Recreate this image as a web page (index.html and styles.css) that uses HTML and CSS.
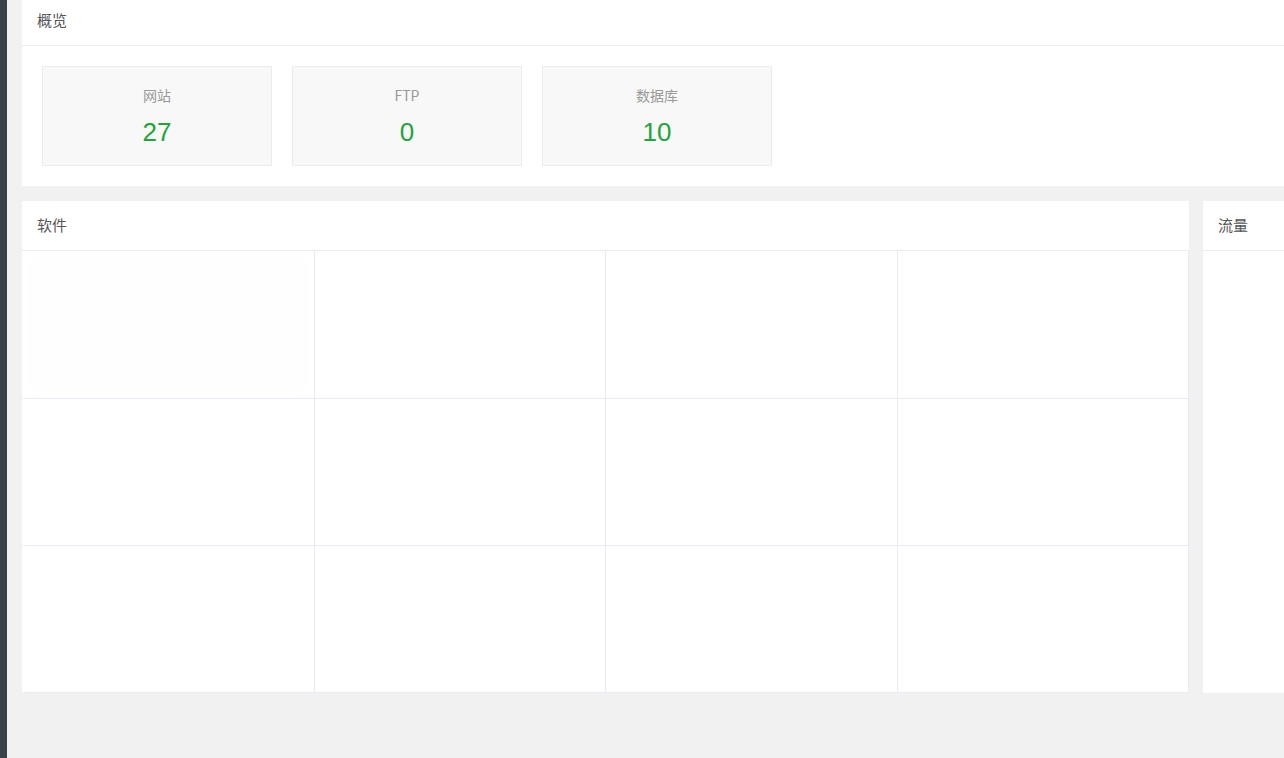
FILE: index.html
```html
<!DOCTYPE html>
<html lang="zh-CN">
<head>
<meta charset="utf-8">
<title>概览</title>
<link rel="stylesheet" href="styles.css">
</head>
<body>
<div class="layout">
  <aside class="sidebar"></aside>
  <main class="main">
    <section class="panel panel-overview">
      <div class="panel-head">概览</div>
      <div class="stats">
        <div class="stat"><div class="stat-label">网站</div><div class="stat-num">27</div></div>
        <div class="stat"><div class="stat-label">FTP</div><div class="stat-num">0</div></div>
        <div class="stat"><div class="stat-label">数据库</div><div class="stat-num">10</div></div>
      </div>
    </section>
    <div class="row">
      <section class="panel panel-soft">
        <div class="panel-head">软件</div>
        <div class="soft-grid">
          <div class="cell"><div class="cell-hover"></div></div>
          <div class="cell"></div>
          <div class="cell"></div>
          <div class="cell"></div>
          <div class="cell"></div>
          <div class="cell"></div>
          <div class="cell"></div>
          <div class="cell"></div>
          <div class="cell"></div>
          <div class="cell"></div>
          <div class="cell"></div>
          <div class="cell"></div>
        </div>
      </section>
      <section class="panel panel-flow">
        <div class="panel-head">流量</div>
        <div class="flow-body"></div>
      </section>
    </div>
  </main>
</div>
</body>
</html>
```
FILE: styles.css
```css
html, body {
  margin: 0;
  padding: 0;
  height: 100%;
  overflow: hidden;
  background: #f1f1f1;
  font-family: "Noto Sans CJK SC", "Liberation Sans", sans-serif;
}
.layout {
  display: flex;
  height: 100%;
}
.sidebar {
  flex: 0 0 7px;
  background: #39414b;
}
.main {
  flex: 1 1 auto;
  min-width: 0;
  padding-left: 15px;
  margin-top: -4px;
  overflow: hidden;
}
.panel {
  background: #fff;
}
.panel-head {
  height: 49px;
  line-height: 48px;
  padding-left: 15px;
  font-size: 15px;
  color: #555;
  border-bottom: 1px solid #ececec;
}
.panel-overview {
  width: 1400px;
}
.stats {
  display: flex;
  gap: 20px;
  padding: 20px;
}
.stat {
  width: 228px;
  height: 98px;
  background: #f8f8f8;
  border: 1px solid #ececec;
  text-align: center;
}
.stat-label {
  margin-top: 18px;
  font-size: 14px;
  line-height: 20px;
  color: #999;
}
.stat-num {
  margin-top: 12px;
  font-family: "Liberation Sans", Arial, sans-serif;
  font-size: 26px;
  line-height: 30px;
  color: #20a53a;
}
.row {
  display: flex;
  gap: 14px;
  margin-top: 15px;
  width: 1400px;
}
.panel-soft {
  flex: 0 0 1167px;
}
.soft-grid {
  display: grid;
  grid-template-columns: repeat(4, 1fr);
  padding-left: 1px;
}
.cell {
  box-sizing: border-box;
  height: 147px;
  border-right: 1px solid #ebe9f7;
  border-bottom: 1px solid #ebe9f7;
  padding: 7px 7px 7px 6px;
  display: flex;
}
.cell:nth-child(-n+4) {
  height: 148px;
}
.cell-hover {
  flex: 1;
  border-radius: 14px;
  box-shadow: 0 0 6px rgba(0, 0, 0, 0.015);
  background: #fefefe;
}
.panel-flow {
  flex: 1 1 auto;
  display: flex;
  flex-direction: column;
}
.flow-body {
  flex: 1;
}
```
